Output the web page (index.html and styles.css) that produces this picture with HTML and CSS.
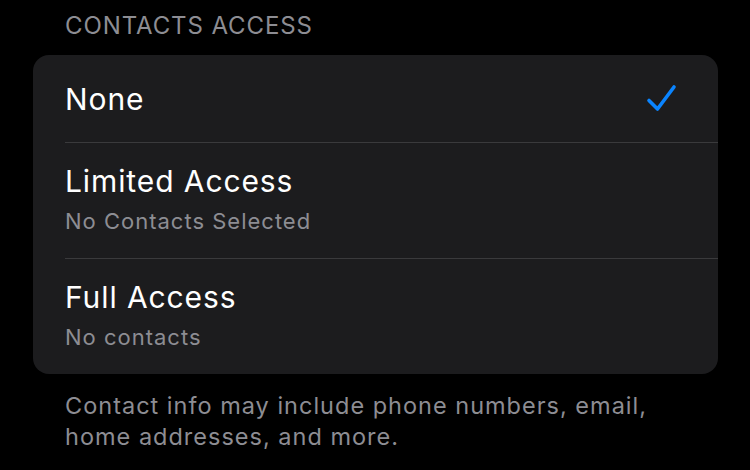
FILE: index.html
```html
<!DOCTYPE html>
<html>
<head>
<meta charset="utf-8">
<link rel="stylesheet" href="styles.css">
</head>
<body>
<div class="page">
  <div class="header">CONTACTS ACCESS</div>
  <div class="card">
    <div class="row single">
      <div class="texts"><div class="title">None</div></div>
      <svg class="check" width="34" height="32" viewBox="0 0 34 32"><path d="M4 17.5 L12.5 26 L29 4" fill="none" stroke="#0a84ff" stroke-width="3.6" stroke-linecap="round" stroke-linejoin="round"/></svg>
    </div>
    <div class="row double">
      <div class="texts"><div class="title">Limited Access</div><div class="sub">No Contacts Selected</div></div>
    </div>
    <div class="row double last">
      <div class="texts"><div class="title">Full Access</div><div class="sub">No contacts</div></div>
    </div>
  </div>
  <div class="footer">Contact info may include phone numbers, email,<br>home addresses, and more.</div>
</div>
</body>
</html>
```
FILE: styles.css
```css
html, body { margin: 0; padding: 0; background: #000; }
body { font-family: Inter, "Noto Sans", sans-serif; color: #fff; width: 750px; height: 470px; overflow: hidden; }
.page { padding: 10px 32px 0 33px; }
.header { color: #8d8d93; font-size: 24px; letter-spacing: 0.9px; padding-left: 32px; height: 45px; line-height: 32px; }
.card { background: #1c1c1e; border-radius: 16px; overflow: hidden; }
.row { display: flex; align-items: center; padding-left: 32px; padding-right: 39px; position: relative; }
.row + .row::before { content: ""; position: absolute; left: 32px; right: 0; top: 0; height: 1px; background: #3a3a3c; }
.row.single { height: 87px; }
.row.double { height: 116px; }
.texts { flex: 1; }
.title { font-size: 30px; line-height: 34px; letter-spacing: 0.9px; }
.sub { font-size: 22px; color: #8d8d93; line-height: 30px; margin-top: 8px; letter-spacing: 1px; }
.check { display: block; }
.footer { color: #8d8d93; font-size: 23.5px; line-height: 31px; padding-left: 32px; padding-top: 16px; letter-spacing: 1px; }
```
